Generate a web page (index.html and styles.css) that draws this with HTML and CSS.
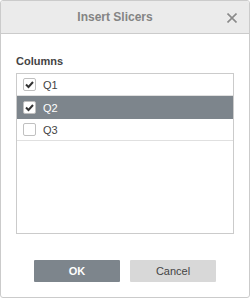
FILE: index.html
```html
<!DOCTYPE html>
<html>
<head>
<meta charset="utf-8">
<link rel="stylesheet" href="styles.css">
</head>
<body>
<div class="dialog">
  <div class="header">
    <span class="title">Insert Slicers</span>
    <span class="close"><svg width="10" height="10" viewBox="0 0 10 10"><path d="M0.5 0.5L9.5 9.5M9.5 0.5L0.5 9.5" stroke="#8a8a8a" stroke-width="1.6" fill="none"/></svg></span>
  </div>
  <div class="content">
    <div class="label">Columns</div>
    <div class="list">
      <div class="row">
        <span class="box"><svg width="11" height="11" viewBox="0 0 11 11"><path d="M2 5.5L4.5 8L9 3" stroke="#333" stroke-width="2" fill="none"/></svg></span>
        <span class="text">Q1</span>
      </div>
      <div class="row selected">
        <span class="box"><svg width="11" height="11" viewBox="0 0 11 11"><path d="M2 5.5L4.5 8L9 3" stroke="#333" stroke-width="2" fill="none"/></svg></span>
        <span class="text">Q2</span>
      </div>
      <div class="row">
        <span class="box"></span>
        <span class="text">Q3</span>
      </div>
    </div>
    <div class="buttons">
      <button class="btn primary">OK</button>
      <button class="btn">Cancel</button>
    </div>
  </div>
</div>
</body>
</html>
```
FILE: styles.css
```css
html, body {
  margin: 0;
  padding: 0;
  background: #fff;
}
.dialog {
  width: 250px;
  height: 298px;
  box-sizing: border-box;
  border: 1px solid #cbcbcb;
  border-radius: 3px;
  font-family: "Liberation Sans", Arial, sans-serif;
  font-size: 11px;
  color: #444;
  display: flex;
  flex-direction: column;
  overflow: hidden;
}
.header {
  height: 32px;
  background: #ebebeb;
  border-bottom: 1px solid #cbcbcb;
  display: flex;
  align-items: center;
  position: relative;
  padding-right: 20px;
}
.title {
  flex: 1;
  text-align: center;
  font-weight: bold;
  font-size: 12px;
  color: #848484;
}
.close {
  position: absolute;
  right: 12px;
  top: 12px;
  width: 10px;
  height: 10px;
  display: flex;
}
.content {
  flex: 1;
  padding: 0 15px;
  display: flex;
  flex-direction: column;
}
.label {
  margin-top: 20px;
  height: 19px;
  line-height: 14px;
  font-weight: bold;
  color: #444;
}
.list {
  width: 218px;
  height: 161px;
  box-sizing: border-box;
  border: 1px solid #cbcbcb;
}
.row {
  height: 21px;
  border-bottom: 1px solid #e0e0e0;
  display: flex;
  align-items: center;
  padding-left: 6px;
}
.row.selected {
  background: #7d858c;
  color: #fff;
  height: 23px;
  border-bottom: none;
}
.box {
  width: 11px;
  height: 11px;
  border: 1px solid #c0c0c0;
  background: #fff;
  border-radius: 2px;
  display: flex;
}
.text {
  margin-left: 7px;
  font-size: 11px;
}
.buttons {
  margin-top: 26px;
  display: flex;
  justify-content: center;
  gap: 10px;
}
.btn {
  width: 86px;
  height: 22px;
  border: none;
  border-radius: 1px;
  background: #d8d8d8;
  color: #444;
  font-family: "Liberation Sans", Arial, sans-serif;
  font-size: 11px;
  padding: 0;
}
.btn.primary {
  background: #7d858c;
  color: #fff;
  font-weight: bold;
}
```
